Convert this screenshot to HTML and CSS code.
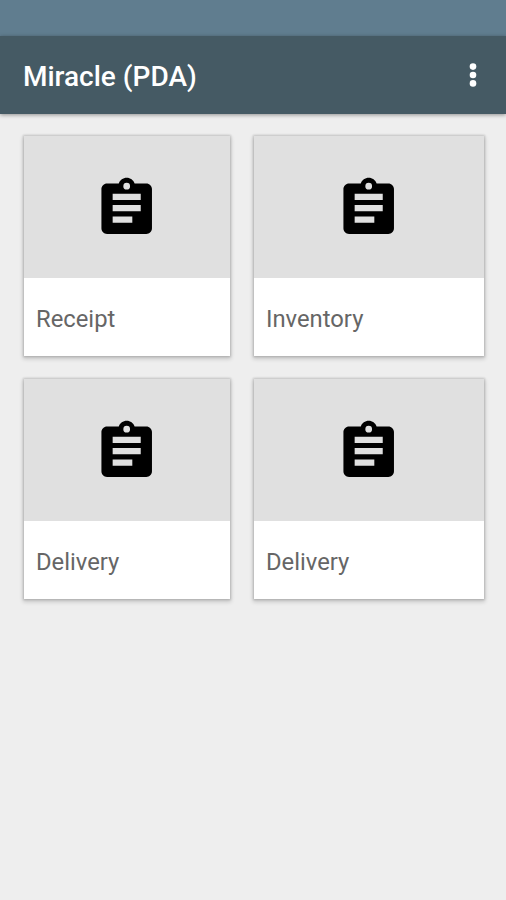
FILE: index.html
```html
<!DOCTYPE html>
<html lang="en">
<head>
    <meta charset="UTF-8">
    <meta name="viewport" content="width=device-width, initial-scale=1.0">
    <title>Miracle (PDA)</title>
    <link rel="stylesheet" href="styles.css">
</head>
<body>

    <!-- shared clipboard icon -->
    <svg class="sprite" width="0" height="0">
        <symbol id="clipboard" viewBox="0 0 24 24">
            <path d="M19 3h-4.18C14.4 1.84 13.3 1 12 1c-1.3 0-2.4.84-2.82 2H5c-1.1 0-2 .9-2 2v14c0 1.1.9 2 2 2h14c1.1 0 2-.9 2-2V5c0-1.1-.9-2-2-2zm-7-.2a1.2 1.2 0 0 1 0 2.4a1.2 1.2 0 0 1 0-2.4zM14 17H7v-2.2h7V17zm3-4.1H7v-2.2h10v2.2zm0-4H7V6.7h10v2.2z"/>
        </symbol>
    </svg>

    <div class="status-bar"></div>

    <!-- toolbar -->
    <header class="toolbar">
        <h1 class="title">Miracle (PDA)</h1>
        <button class="menu" aria-label="More options">
            <svg class="dots" viewBox="0 0 10 26">
                <circle cx="5" cy="4.6" r="3.3"/>
                <circle cx="5" cy="13" r="3.3"/>
                <circle cx="5" cy="21.4" r="3.3"/>
            </svg>
        </button>
    </header>

    <!-- cards -->
    <main class="grid">
        <div class="card">
            <div class="cover"><svg class="icon"><use href="#clipboard"/></svg></div>
            <div class="label">Receipt</div>
        </div>
        <div class="card">
            <div class="cover"><svg class="icon"><use href="#clipboard"/></svg></div>
            <div class="label">Inventory</div>
        </div>
        <div class="card">
            <div class="cover"><svg class="icon"><use href="#clipboard"/></svg></div>
            <div class="label">Delivery</div>
        </div>
        <div class="card">
            <div class="cover"><svg class="icon"><use href="#clipboard"/></svg></div>
            <div class="label">Delivery</div>
        </div>
    </main>

</body>
</html>
```

FILE: styles.css
```css
body {
    margin: 0;
    min-height: 100vh;
    background: #eee;
    font-family: Roboto, sans-serif;
}

.sprite {
    display: none;
}

.status-bar {
    height: 36px;
    background: #607d8f;
}

/* toolbar */
.toolbar {
    display: flex;
    align-items: center;
    justify-content: space-between;
    box-sizing: border-box;
    height: 78px;
    padding: 2px 28px 0 23px;
    background: #455a64;
    box-shadow: 0 1px 4px rgba(0, 0, 0, 0.4);
}

.title {
    margin: 0;
    color: white;
    font-size: 28px;
    font-weight: 500;
}

.menu {
    width: 10px;
    height: 28px;
    margin-bottom: 2px;
    padding: 0;
    border: none;
    background: none;
}

.dots {
    display: block;
    width: 10px;
    height: 26px;
    fill: white;
}

/* cards */
.grid {
    display: grid;
    grid-template-columns: 206px 229.5px;
    gap: 23px 24px;
    padding: 22px 22px 22px 24px;
}

.card {
    background: white;
    box-shadow: 0 0 2px 1px rgba(0, 0, 0, 0.14), 0 2px 4px 1px rgba(0, 0, 0, 0.17);
}

.cover {
    display: flex;
    align-items: center;
    justify-content: center;
    box-sizing: border-box;
    height: 142px;
    padding-top: 3px;
    background: #e0e0e0;
}

.icon {
    width: 67.4px;
    height: 67.4px;
    fill: black;
}

.label {
    display: flex;
    align-items: center;
    box-sizing: border-box;
    height: 78px;
    padding: 3px 0 0 12px;
    color: #666;
    font-size: 23.8px;
}
```
